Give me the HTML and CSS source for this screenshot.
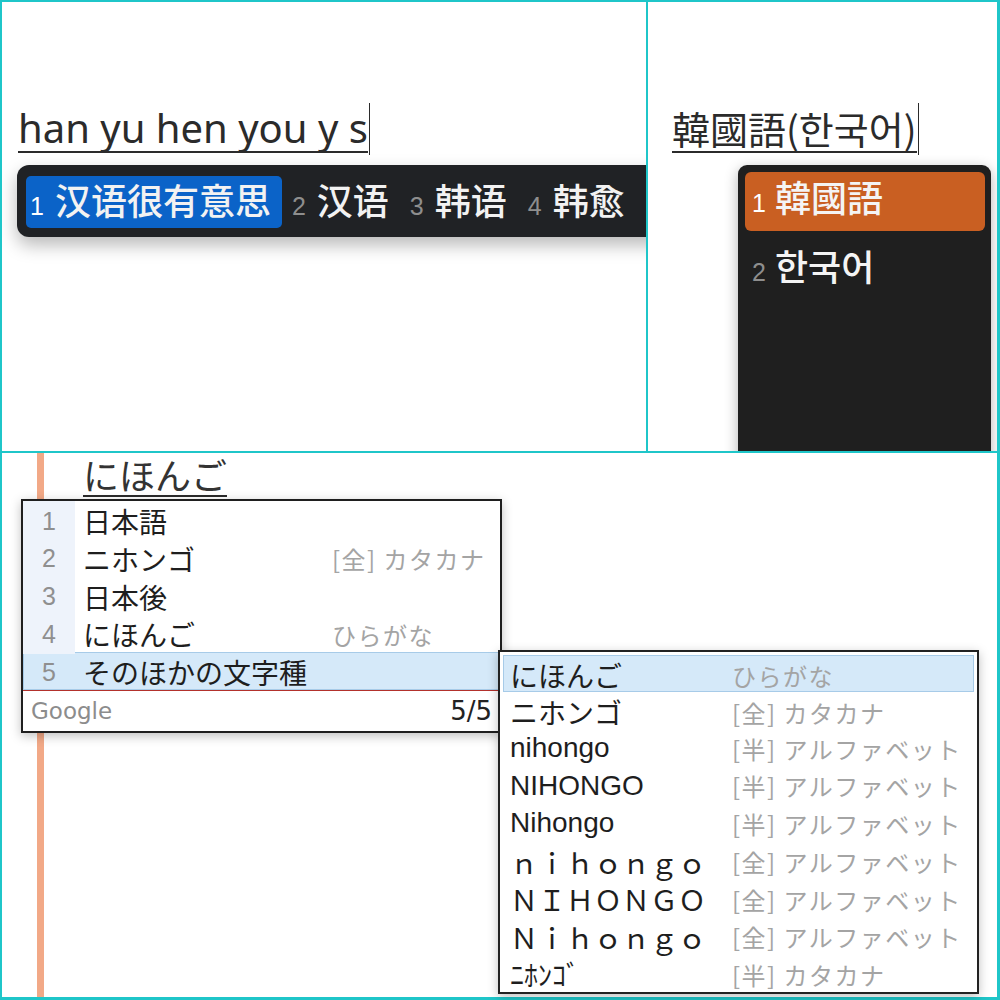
FILE: index.html
```html
<!DOCTYPE html>
<html lang="ja">
<head>
<meta charset="utf-8">
<title>IME candidate windows</title>
<link rel="stylesheet" href="styles.css">
</head>
<body>
<div class="frame">
  <section class="panel pinyin">
    <div class="input"><span class="typed">han yu hen you y s</span><span class="cursor"></span></div>
    <div class="bar">
      <div class="cand sel"><span class="num">1</span><span class="word">汉语很有意思</span></div>
      <div class="cand"><span class="num">2</span><span class="word">汉语</span></div>
      <div class="cand"><span class="num">3</span><span class="word">韩语</span></div>
      <div class="cand"><span class="num">4</span><span class="word">韩愈</span></div>
    </div>
  </section>

  <section class="panel korean">
    <div class="input"><span class="typed ko">韓國語(한국어)</span><span class="cursor"></span></div>
    <div class="kpop">
      <div class="krow sel"><span class="num">1</span><span class="word">韓國語</span></div>
      <div class="krow"><span class="num">2</span><span class="word">한국어</span></div>
    </div>
  </section>

  <section class="panel japanese">
    <div class="doc">
      <div class="title">にほんご</div>
      <div class="jwin">
        <div class="jrow"><span class="jnum">1</span><span class="jword">日本語</span><span class="jnote"></span></div>
        <div class="jrow"><span class="jnum">2</span><span class="jword">ニホンゴ</span><span class="jnote">[全] カタカナ</span></div>
        <div class="jrow"><span class="jnum">3</span><span class="jword">日本後</span><span class="jnote"></span></div>
        <div class="jrow"><span class="jnum">4</span><span class="jword">にほんご</span><span class="jnote">ひらがな</span></div>
        <div class="jrow sel"><span class="jnum">5</span><span class="jword">そのほかの文字種</span><span class="jnote"></span></div>
        <div class="jfoot"><span class="brand">Google</span><span class="count">5/5</span></div>
      </div>
    </div>
    <div class="jsub">
      <div class="srow sel"><span class="sword">にほんご</span><span class="jnote">ひらがな</span></div>
      <div class="srow"><span class="sword">ニホンゴ</span><span class="jnote">[全] カタカナ</span></div>
      <div class="srow"><span class="sword">nihongo</span><span class="jnote">[半] アルファベット</span></div>
      <div class="srow"><span class="sword">NIHONGO</span><span class="jnote">[半] アルファベット</span></div>
      <div class="srow"><span class="sword">Nihongo</span><span class="jnote">[半] アルファベット</span></div>
      <div class="srow"><span class="sword">ｎｉｈｏｎｇｏ</span><span class="jnote">[全] アルファベット</span></div>
      <div class="srow"><span class="sword">ＮＩＨＯＮＧＯ</span><span class="jnote">[全] アルファベット</span></div>
      <div class="srow"><span class="sword">Ｎｉｈｏｎｇｏ</span><span class="jnote">[全] アルファベット</span></div>
      <div class="srow"><span class="sword">ﾆﾎﾝｺﾞ</span><span class="jnote">[半] カタカナ</span></div>
    </div>
  </section>
</div>
</body>
</html>
```

FILE: styles.css
```css
* { box-sizing: border-box; }
html, body { margin: 0; padding: 0; background: #fff; }

.frame {
  width: 1000px;
  height: 1000px;
  border-style: solid;
  border-color: #1fc6c9;
  border-width: 2px 3px 3px 2px;
  background: #1fc6c9;
  display: grid;
  grid-template-columns: 644px 349px;
  grid-template-rows: 449px 544px;
  gap: 2px;
}

.panel {
  background: #fff;
  overflow: hidden;
  position: relative;
}

/* ---------- text inputs ---------- */
.input {
  display: flex;
  align-items: flex-end;
}
.typed {
  font-family: "Noto Sans", sans-serif;
  font-size: 40px;
  line-height: 46px;
  color: #2b2b2b;
  border-bottom: 2px solid #2b2b2b;
  margin-bottom: 2px;
  white-space: nowrap;
}
.typed.ko {
  font-family: "Noto Sans CJK KR", sans-serif;
  font-size: 38px;
}
.cursor {
  width: 1px;
  height: 52px;
  background: #2b2b2b;
  margin-left: 1px;
}

/* ---------- pinyin panel ---------- */
.pinyin { padding: 101px 0 0 16px; }

.bar {
  display: flex;
  width: max-content;
  margin: 10px 0 0 -1px;
  padding: 11px 40px 9px 9px;
  background: #202225;
  border-radius: 12px;
  box-shadow: 0 8px 18px rgba(0, 0, 0, 0.28);
}
.cand {
  display: flex;
  align-items: baseline;
  height: 52px;
  padding: 0 11px 0 4px;
  margin-right: 6px;
  border-radius: 5px;
}
.cand.sel { background: #0b63c8; }
.num {
  font-family: "Liberation Sans", sans-serif;
  font-size: 25px;
  line-height: 46px;
  color: #8e8e8e;
}
.cand .num { margin-right: 11px; }
.sel .num { color: #fff; }
.cand .word {
  font-family: "Noto Sans CJK SC", sans-serif;
  font-size: 36px;
  font-weight: 500;
  line-height: 46px;
  color: #f2f2f2;
}

/* ---------- korean panel ---------- */
.korean { padding: 101px 0 0 24px; }

.kpop {
  width: 253px;
  height: 320px;
  margin: 10px 0 0 66px;
  padding: 7px 6px 0 7px;
  background: #1f1f1f;
  border-radius: 9px 9px 0 0;
  box-shadow: 0 4px 14px rgba(0, 0, 0, 0.3);
}
.krow {
  display: flex;
  align-items: baseline;
  height: 59px;
  padding-left: 7px;
  border-radius: 6px;
}
.krow + .krow { margin-top: 10px; }
.krow.sel { background: #c95f22; }
.krow .num { margin-right: 9px; line-height: 48px; }
.krow .word {
  font-family: "Noto Sans CJK KR", sans-serif;
  font-size: 36px;
  font-weight: 500;
  line-height: 48px;
  color: #f4f4f4;
}

/* ---------- japanese panel ---------- */
.japanese {
  grid-column: 1 / -1;
  overflow: visible;
}

.doc {
  height: 100%;
  margin-left: 35px;
  border-left: 7px solid #f2a987;
}
.title {
  width: max-content;
  margin-left: 39px;
  font-family: "Noto Sans CJK JP", sans-serif;
  font-size: 36px;
  line-height: 42px;
  color: #333;
  border-bottom: 2px solid #2b2b2b;
}
.jwin {
  width: 481px;
  margin: 2px 0 0 -23px;
  border: 2px solid #1f1f1f;
  background: #fff;
  box-shadow: 0 3px 10px rgba(0, 0, 0, 0.25);
}
.jrow {
  display: grid;
  grid-template-columns: 52px 257px 1fr;
  height: 37.75px;
  align-items: center;
}
.jnum {
  height: 100%;
  display: flex;
  align-items: center;
  justify-content: center;
  background: #eef3fb;
  font-family: "Liberation Sans", sans-serif;
  font-size: 25px;
  color: #8f8f8f;
}
.jword {
  padding-left: 8px;
  font-family: "Liberation Sans", "Noto Sans CJK JP", sans-serif;
  font-size: 28px;
  color: #1e1e1e;
  white-space: nowrap;
}
.jnote {
  font-family: "Noto Sans CJK JP", sans-serif;
  font-size: 24px;
  letter-spacing: 1.5px;
  color: #a4a4a4;
  white-space: nowrap;
}
.jrow.sel {
  background: #d5e9f9;
  box-shadow: inset 0 0 0 1px #a7cbe8;
}
.jrow.sel .jnum { background: transparent; }

.jfoot {
  height: 41.5px;
  border-top: 1.5px solid #b3312c;
  display: flex;
  align-items: center;
  justify-content: space-between;
  padding: 0 8px 0 8px;
  font-family: "DejaVu Sans", sans-serif;
}
.brand { font-size: 23px; color: #8c8c8c; }
.count { font-size: 26px; color: #222; }

.jsub {
  position: absolute;
  left: 496px;
  top: 197px;
  width: 481px;
  padding: 3px 3px 0 3px;
  border: 2px solid #222;
  background: #fff;
  box-shadow: 0 3px 10px rgba(0, 0, 0, 0.25);
}
.srow {
  display: grid;
  grid-template-columns: 222px 1fr;
  height: 37.4px;
  align-items: center;
  padding-left: 7px;
}
.srow.sel {
  background: #d5e9f9;
  box-shadow: inset 0 0 0 1px #a7cbe8;
}
.sword {
  font-family: "Liberation Sans", "Noto Sans CJK JP", sans-serif;
  font-size: 28px;
  color: #1e1e1e;
  white-space: nowrap;
}
```
